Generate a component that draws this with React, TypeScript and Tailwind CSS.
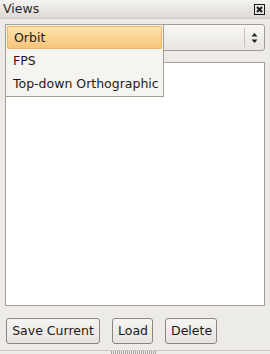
import React from 'react';

const font = { fontFamily: '"DejaVu Sans", sans-serif' };

const CloseIcon: React.FC = () => (
  <svg width="11" height="11" viewBox="0 0 11 11" className="block">
    <rect x="0.5" y="0.5" width="10" height="10" fill="none" stroke="#1a1a1a" strokeWidth="1" />
    <path d="M3 3 L8 8 M8 3 L3 8" stroke="#1a1a1a" strokeWidth="2" />
  </svg>
);

const ComboArrows: React.FC = () => (
  <svg width="7" height="12" viewBox="0 0 7 12" className="block">
    <path d="M3.5 1 L6.5 4.5 L0.5 4.5 Z" fill="#222" />
    <path d="M0.5 7.5 L6.5 7.5 L3.5 11 Z" fill="#222" />
  </svg>
);

const Button: React.FC<{ label: string; className?: string }> = ({ label, className }) => (
  <button
    className={`h-[26px] px-[5px] rounded-[3px] border border-[#8b8680] bg-gradient-to-b from-[#f6f5f3] to-[#e6e3df] text-[#1a1a1a] text-[12.5px] leading-none ${className ?? ''}`}
  >
    {label}
  </button>
);

const views = ['Orbit', 'FPS', 'Top-down Orthographic'];

export default function App() {
  return (
    <div className="relative w-[270px] h-[354px] overflow-hidden bg-[#edebe8] flex flex-col" style={font}>
      {/* Title bar */}
      <div className="h-[19px] flex items-center justify-between pl-[3px] pr-[5px] bg-gradient-to-b from-[#f4f3f1] to-[#dcd9d5] border-b border-[#d0ccc7]">
        <span className="text-[12.5px] text-[#2a2a2a] leading-none">Views</span>
        <CloseIcon />
      </div>

      <div className="flex-1 flex flex-col px-[5px] pt-[5px]">
        {/* Combo box */}
        <div className="h-[27px] flex items-center rounded-[3px] border border-[#a39b92] bg-gradient-to-b from-[#f8f7f5] to-[#e9e6e2]">
          <div className="flex-1" />
          <div className="w-px h-[19px] bg-[#c7c2bc]" />
          <div className="w-[19px] flex justify-center">
            <ComboArrows />
          </div>
        </div>

        {/* List */}
        <div className="mt-[11px] h-[244px] w-[260px] bg-white border border-[#a89d91]" />

        {/* Buttons */}
        <div className="mt-[12px] flex gap-[12px] pl-px">
          <Button label="Save Current" className="w-[94px]" />
          <Button label="Load" className="w-[41px]" />
          <Button label="Delete" className="w-[52px]" />
        </div>
      </div>

      {/* Bottom separator with grip */}
      <div className="h-[4px] border-t border-[#c9c4be] flex justify-center">
        <div className="w-[46px] h-[3px] ml-[-2px] bg-[repeating-linear-gradient(90deg,#a8a29b_0px,#a8a29b_1px,transparent_1px,transparent_2px)]" />
      </div>

      {/* Dropdown popup */}
      <div className="absolute left-[5px] top-[24px] w-[159px] h-[73px] bg-[#f5f4f1] border border-[#a89d91] p-px flex flex-col">
        {views.map((v, i) => (
          <div
            key={v}
            className={`h-[23px] flex items-center pl-[6px] pt-px text-[12.5px] text-[#1a1a1a] whitespace-nowrap ${
              i === 0 ? 'bg-gradient-to-b from-[#fee2ad] to-[#f7c47b] border border-[#efb869] rounded-[1px] pl-[5px]' : ''
            }`}
          >
            {v}
          </div>
        ))}
      </div>
    </div>
  );
}
